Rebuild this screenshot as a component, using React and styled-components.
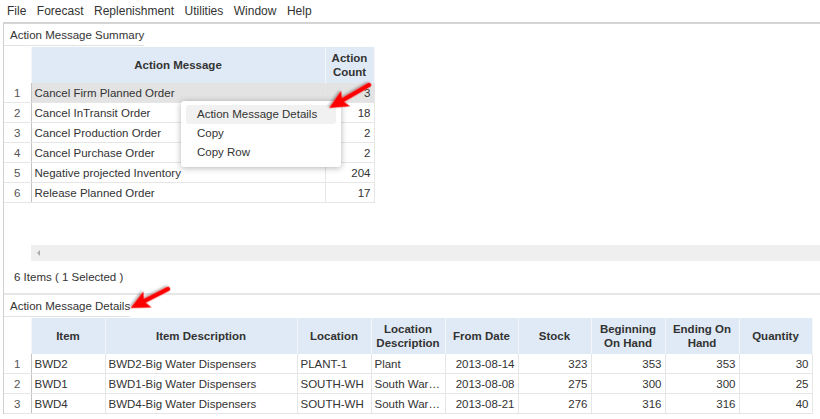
import styled, { createGlobalStyle } from "styled-components";

const GlobalStyle = createGlobalStyle`
  body {
    margin: 0;
    background: #fff;
    font-family: "Liberation Sans", Arial, sans-serif;
    color: #333;
  }
`;

const Page = styled.div`
  position: relative;
  width: 820px;
  height: 419px;
  overflow: hidden;
`;

const MenuBar = styled.nav`
  display: flex;
  align-items: center;
  height: 22px;
  margin-left: 3px;
  padding-left: 4px;
  gap: 10.5px;
  font-size: 12px;
  color: #333;
  border-bottom: 2px solid #d4d4d4;
`;

const MenuItem = styled.span`
  white-space: nowrap;
`;

const Workspace = styled.div`
  margin-left: 3px;
  border-left: 1px solid #d0d0d0;
  display: flex;
  flex-direction: column;
`;

const PanelTitle = styled.div`
  height: 21px;
  display: flex;
  align-items: center;
  padding-left: 6px;
  font-size: 11.5px;
  color: #333;
  border-bottom: 1px solid #e2e2e2;
`;

const Section = styled.section`
  display: flex;
  flex-direction: column;
  align-items: flex-start;
  border-bottom: ${(p) => (p.$divider ? "2px solid #e6e6e6" : "none")};
`;

const Grid = styled.table`
  width: ${(p) => p.$w}px;
  border-collapse: collapse;
  table-layout: fixed;
  font-size: 11.5px;
  margin-top: 1px;
`;

const HeadCell = styled.th`
  height: 36px;
  padding: 0 4px;
  background: ${(p) => (p.$blank ? "#fff" : "#dfeaf6")};
  border-right: 1px solid #f3f6fa;
  font-weight: bold;
  color: #333;
  line-height: 14px;
  text-align: center;
`;

const Cell = styled.td`
  height: 19px;
  padding: 0 3px;
  border-bottom: 1px solid #e6e6e6;
  border-right: 1px solid #e6e6e6;
  background: ${(p) => (p.$sel ? "#e3e3e3" : "#fff")};
  text-align: ${(p) => (p.$right ? "right" : "left")};
  white-space: nowrap;
  overflow: hidden;
  text-overflow: ellipsis;
  color: #333;
`;

const NumCell = styled.td`
  height: 19px;
  text-align: center;
  color: #555;
  border-bottom: 1px solid #e6e6e6;
  border-right: 1px solid #c4c4c4;
  padding: 0;
`;

const Spacer = styled.div`
  height: ${(p) => p.$h}px;
`;

const ScrollBar = styled.div`
  align-self: stretch;
  margin-left: 27px;
  height: 16px;
  background: #efefef;
  display: flex;
  align-items: center;
  padding-left: 6px;
`;

const ScrollArrow = styled.span`
  width: 0;
  height: 0;
  border-top: 3px solid transparent;
  border-bottom: 3px solid transparent;
  border-right: 3px solid #aaa;
`;

const Footer = styled.div`
  align-self: stretch;
  height: 32px;
  display: flex;
  align-items: center;
  padding-left: 10px;
  font-size: 11.5px;
  color: #333;
`;

const ContextMenu = styled.ul`
  position: absolute;
  left: 181px;
  top: 101px;
  width: 150px;
  margin: 0;
  padding: 4px 5px 5px;
  list-style: none;
  background: #fff;
  border-radius: 3px;
  box-shadow: 0 1px 6px rgba(0, 0, 0, 0.3);
  font-size: 11.5px;
`;

const ContextItem = styled.li`
  height: 19px;
  line-height: 19px;
  padding-left: 11px;
  border-radius: 3px;
  background: ${(p) => (p.$hover ? "#f1f1f1" : "transparent")};
  color: #333;
`;

const Arrow = styled.svg`
  position: absolute;
  left: ${(p) => p.$x}px;
  top: ${(p) => p.$y}px;
  overflow: visible;
`;

const summary = [
  ["Cancel Firm Planned Order", 3],
  ["Cancel InTransit Order", 18],
  ["Cancel Production Order", 2],
  ["Cancel Purchase Order", 2],
  ["Negative projected Inventory", 204],
  ["Release Planned Order", 17],
];

const summaryCols = [27, 294, 49];

const detailCols = [
  ["Item", 74],
  ["Item Description", 192],
  ["Location", 74],
  ["Location Description", 74],
  ["From Date", 73],
  ["Stock", 73],
  ["Beginning On Hand", 74],
  ["Ending On Hand", 74],
  ["Quantity", 73],
];

const details = [
  ["BWD2", "BWD2-Big Water Dispensers", "PLANT-1", "Plant", "2013-08-14", 323, 353, 353, 30],
  ["BWD1", "BWD1-Big Water Dispensers", "SOUTH-WH", "South Warehouse", "2013-08-08", 275, 300, 300, 25],
  ["BWD4", "BWD4-Big Water Dispensers", "SOUTH-WH", "South Warehouse", "2013-08-21", 276, 316, 316, 40],
];

function RedArrow({ x, y, len, angle }) {
  return (
    <Arrow $x={x} $y={y} width="1" height="1">
      <defs>
        <filter id={`sh${x}`} x="-50%" y="-50%" width="200%" height="200%">
          <feDropShadow dx="1" dy="1.5" stdDeviation="1.2" floodColor="#000" floodOpacity="0.35" />
        </filter>
      </defs>
      <g transform={`rotate(${angle})`} filter={`url(#sh${x})`}>
        <line x1="0" y1="0" x2={len - 12} y2="0" stroke="#f00" strokeWidth="4.5" strokeLinecap="round" />
        <polygon points={`${len},0 ${len - 19},-9 ${len - 15},0 ${len - 19},9`} fill="#f00" />
      </g>
    </Arrow>
  );
}

export default function App() {
  const detailWidth = 27 + detailCols.reduce((s, c) => s + c[1], 0);
  return (
    <Page>
      <GlobalStyle />
      <MenuBar>
        {["File", "Forecast", "Replenishment", "Utilities", "Window", "Help"].map((m) => (
          <MenuItem key={m}>{m}</MenuItem>
        ))}
      </MenuBar>
      <Workspace>
        <Section $divider>
          <PanelTitle>Action Message Summary</PanelTitle>
          <Grid $w={370}>
            <colgroup>
              {summaryCols.map((w, i) => (
                <col key={i} style={{ width: w }} />
              ))}
            </colgroup>
            <thead>
              <tr>
                <HeadCell $blank />
                <HeadCell>Action Message</HeadCell>
                <HeadCell>Action Count</HeadCell>
              </tr>
            </thead>
            <tbody>
              {summary.map(([msg, count], i) => (
                <tr key={msg}>
                  <NumCell>{i + 1}</NumCell>
                  <Cell $sel={i === 0}>{msg}</Cell>
                  <Cell $sel={i === 0} $right>
                    {count}
                  </Cell>
                </tr>
              ))}
            </tbody>
          </Grid>
          <Spacer $h={42} />
          <ScrollBar>
            <ScrollArrow />
          </ScrollBar>
          <Footer>6 Items ( 1 Selected )</Footer>
        </Section>
        <Section>
          <PanelTitle>Action Message Details</PanelTitle>
          <Grid $w={detailWidth}>
            <colgroup>
              <col style={{ width: 27 }} />
              {detailCols.map(([name, w]) => (
                <col key={name} style={{ width: w }} />
              ))}
            </colgroup>
            <thead>
              <tr>
                <HeadCell $blank />
                {detailCols.map(([name]) => (
                  <HeadCell key={name}>{name}</HeadCell>
                ))}
              </tr>
            </thead>
            <tbody>
              {details.map((row, i) => (
                <tr key={row[0]}>
                  <NumCell>{i + 1}</NumCell>
                  {row.map((v, j) => (
                    <Cell key={j} $right={j >= 4}>
                      {v}
                    </Cell>
                  ))}
                </tr>
              ))}
            </tbody>
          </Grid>
        </Section>
      </Workspace>

      <ContextMenu>
        <ContextItem $hover>Action Message Details</ContextItem>
        <ContextItem>Copy</ContextItem>
        <ContextItem>Copy Row</ContextItem>
      </ContextMenu>

      <RedArrow x={369} y={85} len={46} angle={150} />
      <RedArrow x={168} y={289} len={42} angle={153} />
    </Page>
  );
}
